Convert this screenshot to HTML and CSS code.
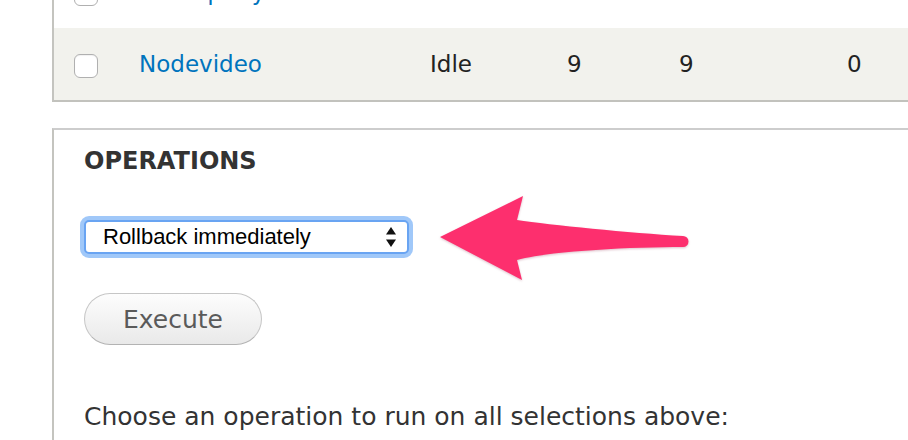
FILE: index.html
```html
<!DOCTYPE html>
<html lang="en">
<head>
<meta charset="utf-8">
<title>Operations</title>
<link rel="stylesheet" href="styles.css">
</head>
<body>
<div class="page">
  <div class="panel table-panel">
    <div class="row">
      <span class="cell cell-check"><span class="checkbox"></span></span>
      <span class="cell"><a class="link" href="#">Nodequery</a></span>
      <span class="cell">Idle</span>
      <span class="cell">9</span>
      <span class="cell">9</span>
      <span class="cell">0</span>
    </div>
    <div class="row row-alt">
      <span class="cell cell-check"><span class="checkbox"></span></span>
      <span class="cell"><a class="link" href="#">Nodevideo</a></span>
      <span class="cell">Idle</span>
      <span class="cell">9</span>
      <span class="cell">9</span>
      <span class="cell">0</span>
    </div>
  </div>

  <div class="panel ops-panel">
    <h2 class="ops-title">Operations</h2>
    <div class="select-row">
      <div class="select" role="listbox" aria-label="Operation">
        <span class="select-text">Rollback immediately</span>
        <svg class="select-arrows" width="12" height="22" viewBox="0 0 12 22" aria-hidden="true">
          <path d="M6 1 L11 8.5 L1 8.5 Z" fill="#111"/>
          <path d="M6 21 L11 13.5 L1 13.5 Z" fill="#111"/>
        </svg>
      </div>
    </div>
    <button class="btn" type="button">Execute</button>
    <p class="desc">Choose an operation to run on all selections above:</p>
  </div>

  <svg class="callout" width="280" height="110" viewBox="0 0 280 110" aria-hidden="true">
    <path d="M10 52 L93 11 L87 35 C120 40 200 48 253 51 A5.5 5.5 0 0 1 253 62 C200 62 120 66 87 75 L92 95 Z" fill="#fd2f6e"/>
  </svg>
</div>
</body>
</html>
```

FILE: styles.css
```css
html, body {
  margin: 0;
  padding: 0;
  background: #ffffff;
  overflow: hidden;
}

body {
  width: 908px;
  height: 440px;
  font-family: "DejaVu Sans", Verdana, sans-serif;
  color: #222222;
}

.page {
  position: relative;
  width: 908px;
  height: 440px;
  overflow: hidden;
}

.panel {
  margin-left: 52px;
  margin-right: -120px;
  border-left: 2px solid #c4c4bf;
}

.table-panel {
  margin-top: -44px;
  border-bottom: 2px solid #c2c2bd;
}

.row {
  display: grid;
  grid-template-columns: 85px 291px 137px 112px 168px 1fr;
  align-items: center;
  height: 72px;
  font-size: 23px;
  background: #ffffff;
}

.row-alt {
  background: #f2f2ed;
}

.cell-check {
  display: flex;
  align-items: center;
}

.checkbox {
  box-sizing: border-box;
  display: block;
  width: 24px;
  height: 24px;
  margin-left: 20px;
  margin-top: 3px;
  background: #ffffff;
  border: 1px solid #b0b0b0;
  border-radius: 6px;
  box-shadow: inset 0 1px 1px rgba(0,0,0,0.06);
}

.link {
  color: #0074bd;
  text-decoration: none;
}

.ops-panel {
  margin-top: 26px;
  border-top: 2px solid #cdcdcd;
  padding: 17px 0 0 30px;
  height: 400px;
}

.ops-title {
  margin: 0 0 45px 0;
  font-size: 24px;
  line-height: 28px;
  font-weight: bold;
  text-transform: uppercase;
  color: #333333;
}

.select-row {
  display: flex;
}

.select {
  box-sizing: border-box;
  display: flex;
  align-items: center;
  justify-content: space-between;
  width: 325px;
  height: 34px;
  padding: 0 10px 0 17px;
  background: #ffffff;
  border: 2px solid #69a4f2;
  border-radius: 5px;
  box-shadow: 0 0 0 4px rgba(128, 182, 247, 0.75);
  font-family: "Liberation Sans", Arial, sans-serif;
  font-size: 22px;
  color: #000000;
}

.select-arrows {
  display: block;
}

.btn {
  box-sizing: border-box;
  display: block;
  margin-top: 39px;
  width: 178px;
  height: 52px;
  padding: 0;
  border: 1px solid #c6c6c6;
  border-bottom-color: #b3b3b3;
  border-radius: 26px;
  background: linear-gradient(#fdfdfd, #e9e9e9);
  font-family: "DejaVu Sans", Verdana, sans-serif;
  font-size: 25px;
  line-height: normal;
  color: #5a5a5a;
  text-align: center;
}

.desc {
  margin: 57px 0 0 0;
  font-size: 25px;
  line-height: 30px;
  color: #333333;
  white-space: nowrap;
}

.callout {
  position: absolute;
  left: 430px;
  top: 185px;
  filter: drop-shadow(0 1px 1px rgba(120, 0, 40, 0.25));
}
```
